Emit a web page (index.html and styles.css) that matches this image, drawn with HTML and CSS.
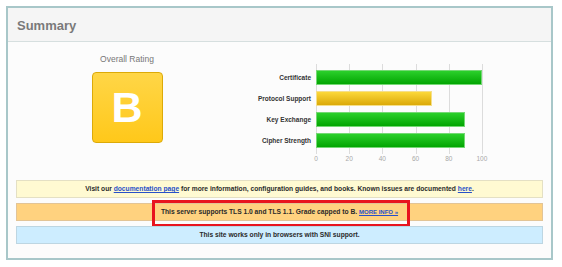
FILE: index.html
```html
<!DOCTYPE html>
<html>
<head>
<meta charset="utf-8">
<link rel="stylesheet" href="styles.css">
</head>
<body>
<div class="frame">
  <div class="header"><h1 class="title">Summary</h1></div>
  <div class="content">
    <div class="top-row">
      <div class="rating">
        <div class="rating-label">Overall Rating</div>
        <div class="grade">B</div>
      </div>
      <div class="chart">
        <div class="labels">
          <div class="label">Certificate</div>
          <div class="label">Protocol Support</div>
          <div class="label">Key Exchange</div>
          <div class="label">Cipher Strength</div>
        </div>
        <div class="plot-col">
          <div class="plot">
            <div class="grid"><span></span><span></span><span></span><span></span><span></span></div>
            <div class="bar green" style="width:166px"></div>
            <div class="bar yellow" style="width:116px"></div>
            <div class="bar green" style="width:149px"></div>
            <div class="bar green" style="width:149px"></div>
          </div>
          <div class="axis"><span>0</span><span>20</span><span>40</span><span>60</span><span>80</span><span>100</span></div>
        </div>
      </div>
    </div>
    <div class="notices">
      <div class="notice info">Visit our <a href="#">documentation page</a> for more information, configuration guides, and books. Known issues are documented <a href="#">here</a>.</div>
      <div class="notice warn"><span class="highlight"></span>This server supports TLS 1.0 and TLS 1.1. Grade capped to B. <a href="#" class="more">MORE INFO »</a></div>
      <div class="notice blue">This site works only in browsers with SNI support.</div>
    </div>
  </div>
</div>
</body>
</html>
```

FILE: styles.css
```css
html, body {
  margin: 0;
  padding: 0;
  background: #ffffff;
  font-family: "Liberation Sans", Arial, sans-serif;
}
.frame {
  margin: 6px 0 0 6px;
  width: 543px;
  height: 250px;
  border: 2px solid #a8c7c9;
  background: #fcfcfc;
  display: flex;
  flex-direction: column;
}
.header {
  height: 33px;
  background: #f5f5f5;
  border-bottom: 1px solid #d6dfdf;
  display: flex;
  align-items: center;
  padding-left: 9px;
}
.title {
  margin: 0;
  font-size: 13px;
  font-weight: bold;
  color: #7a7a7a;
  padding-top: 1px;
}
.content {
  flex: 1;
  display: flex;
  flex-direction: column;
}
.top-row {
  display: flex;
  height: 122px;
}
.rating {
  width: 238px;
  display: flex;
  flex-direction: column;
  align-items: center;
  padding-top: 12px;
}
.rating-label {
  font-size: 8.5px;
  line-height: 10px;
  color: #777;
}
.grade {
  margin-top: 8px;
  width: 69px;
  height: 69px;
  border: 1px solid #dcaa08;
  border-radius: 4px;
  background: linear-gradient(#ffd647, #ffc81a);
  color: #ffffff;
  font-weight: bold;
  font-size: 43px;
  line-height: 69px;
  text-align: center;
}
.chart {
  display: flex;
  padding-top: 22px;
}
.labels {
  width: 65px;
  padding-top: 6px;
  margin-right: 5px;
}
.label {
  height: 15px;
  line-height: 15px;
  margin-bottom: 6px;
  font-size: 6.5px;
  font-weight: bold;
  color: #333;
  text-align: right;
  white-space: nowrap;
}
.plot-col {
  width: 167px;
}
.plot {
  position: relative;
  padding: 6px 0 6px 0;
}
.grid {
  position: absolute;
  inset: 0;
  display: flex;
}
.grid span {
  flex: 1;
  border-left: 1px solid #dcdcdc;
}
.grid span:last-child {
  border-right: 1px solid #dcdcdc;
}
.bar {
  position: relative;
  height: 15px;
  margin-bottom: 6px;
  box-sizing: border-box;
}
.bar:last-child {
  margin-bottom: 0;
}
.bar.green {
  background: linear-gradient(#2bd02b, #02a502);
  border: 1px solid #74d874;
}
.bar.yellow {
  background: linear-gradient(#fcd83a, #dba908);
  border: 1px solid #f5df8a;
}
.axis {
  display: flex;
  margin-left: -16.6px;
  padding-top: 1px;
}
.axis span {
  width: 33.2px;
  flex: none;
  text-align: center;
  font-size: 6.5px;
  color: #a8a8a8;
  line-height: 8px;
}
.notices {
  display: flex;
  flex-direction: column;
  gap: 5px;
  padding: 0 8px;
  margin-top: 16px;
}
.notice {
  position: relative;
  height: 18px;
  box-sizing: border-box;
  border: 1px solid #dcdcdc;
  font-size: 6.7px;
  font-weight: bold;
  color: #2a2a2a;
  text-align: center;
  line-height: 16px;
  white-space: nowrap;
}
.notice a {
  color: #2850c8;
  text-decoration: underline;
}
.notice.info {
  background: #fffad2;
  border-color: #e4e0c4;
}
.notice.warn {
  background: #ffd27f;
  border-color: #e2c496;
}
.notice.blue {
  background: #cdedff;
  border-color: #bdd6e2;
}
.notice .more {
  font-size: 6px;
}
.highlight {
  position: absolute;
  left: 135px;
  top: -4px;
  width: 252px;
  height: 21px;
  border: 3px solid #e8141e;
}
```
